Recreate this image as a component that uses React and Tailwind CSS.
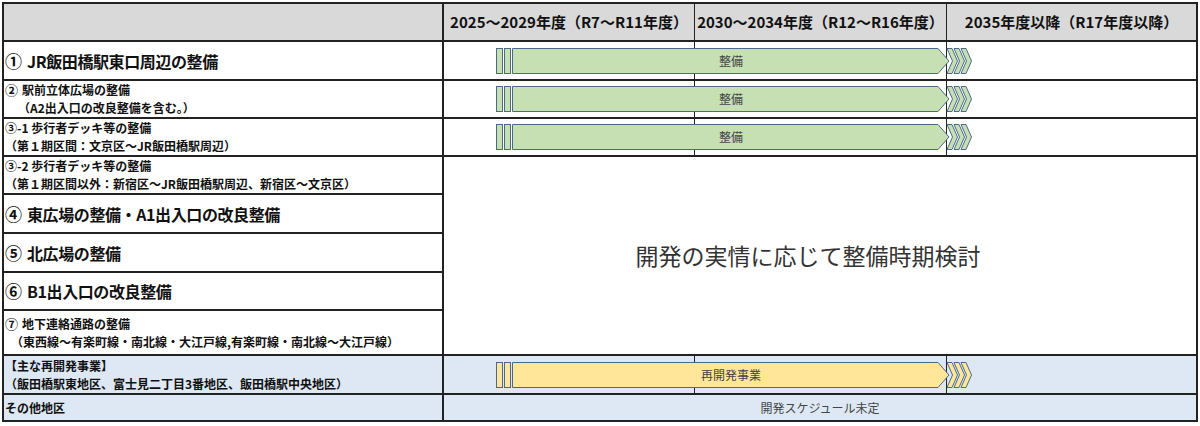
import React from 'react';

const headers = ['2025～2029年度（R7～R11年度）', '2030～2034年度（R12～R16年度）', '2035年度以降（R17年度以降）'];

const GREEN = '#c6e0b4';
const YELLOW = '#ffe699';
const EDGE = '#4b6a8b';

// bar with two start ticks and trailing chevrons
const Bar = ({ fill, label }) => (
  <div className="absolute left-[52px] top-1/2 -translate-y-1/2 w-[476px] h-[26px]">
    <svg width="476" height="26" viewBox="0 0 476 26" className="absolute inset-0">
      <rect x="0.5" y="0.5" width="6" height="25" fill={fill} stroke={EDGE} />
      <rect x="8.5" y="0.5" width="6" height="25" fill={fill} stroke={EDGE} />
      <polygon points="16.5,0.5 442,0.5 453,13 442,25.5 16.5,25.5" fill={fill} stroke={EDGE} />
      {[451, 458, 465].map((x) => (
        <polygon
          key={x}
          points={`${x},0.5 ${x + 5},0.5 ${x + 10.5},13 ${x + 5},25.5 ${x},25.5 ${x + 5.5},13`}
          fill={fill}
          stroke={EDGE}
        />
      ))}
    </svg>
    <div className="absolute left-[16px] right-[22px] inset-y-0 flex items-center justify-center text-[12px] text-[#444]">
      {label}
    </div>
  </div>
);

const Lanes = () => (
  <div className="grid grid-cols-[251px_252px_1fr] h-full">
    <div className="border-r border-[#222]" />
    <div className="border-r border-[#222]" />
    <div />
  </div>
);

const BigLabel = ({ num, text }) => (
  <div className="col-start-1 border-r-2 border-b-2 border-[#222] flex items-center pl-[1px] text-[16px] font-bold text-[#111]">
    <span className="text-[17px] mr-[5px]">{num}</span>
    <span className="tracking-[-0.4px]">{text}</span>
  </div>
);

const SmallLabel = ({ num, top, bottom, indent = '', bg = '' }) => (
  <div className={`col-start-1 border-r-2 border-b-2 border-[#222] flex flex-col justify-center pl-[1px] text-[12px] font-bold leading-[18px] text-[#111] ${bg}`}>
    <span>
      {num && <span className="text-[13px] mr-[4px]">{num}</span>}
      {top}
    </span>
    <span className={indent}>{bottom}</span>
  </div>
);

const BarCell = ({ fill, label, bg = 'bg-white' }) => (
  <div className={`col-start-2 relative border-b-2 border-[#222] ${bg}`}>
    <Lanes />
    <Bar fill={fill} label={label} />
  </div>
);

export default function App() {
  return (
    <div className="w-[1200px] h-[426px] bg-white pl-[2px] pt-[2px] font-['Noto_Sans_CJK_JP','Noto_Sans',sans-serif]">
      <div className="w-[1196px] border-2 border-[#222] grid grid-cols-[440px_752px] grid-rows-[38px_39px_38px_38px_38px_39px_39px_38px_45px_39px_25px]">
        {/* header */}
        <div className="col-start-1 bg-[#d9d9d9] border-r-2 border-b-2 border-[#222]" />
        <div className="col-start-2 bg-[#d9d9d9] border-b-2 border-[#222] grid grid-cols-[251px_252px_1fr]">
          {headers.map((h, i) => (
            <div
              key={h}
              className={`flex items-center justify-center text-[15px] font-bold text-[#111] ${i < 2 ? 'border-r border-[#222]' : ''}`}
            >
              {h}
            </div>
          ))}
        </div>

        {/* ① */}
        <BigLabel num="①" text="JR飯田橋駅東口周辺の整備" />
        <BarCell fill={GREEN} label="整備" />

        {/* ② */}
        <SmallLabel num="②" top="駅前立体広場の整備" bottom="（A2出入口の改良整備を含む。）" indent="pl-[13px]" />
        <BarCell fill={GREEN} label="整備" />

        {/* ③-1 */}
        <SmallLabel top="③-1 歩行者デッキ等の整備" bottom="（第１期区間：文京区～JR飯田橋駅周辺）" />
        <BarCell fill={GREEN} label="整備" />

        {/* ③-2 */}
        <SmallLabel top="③-2 歩行者デッキ等の整備" bottom="（第１期区間以外：新宿区～JR飯田橋駅周辺、新宿区～文京区）" />
        <div className="col-start-2 row-span-5 border-b-2 border-[#222] bg-white flex items-center justify-center pr-[24px] text-[23px] text-[#333]">
          開発の実情に応じて整備時期検討
        </div>

        <BigLabel num="④" text="東広場の整備・A1出入口の改良整備" />
        <BigLabel num="⑤" text="北広場の整備" />
        <BigLabel num="⑥" text="B1出入口の改良整備" />
        <SmallLabel
          num="⑦"
          top="地下連絡通路の整備"
          bottom="（東西線～有楽町線・南北線・大江戸線,有楽町線・南北線～大江戸線）"
          indent="pl-[6px]"
        />

        {/* redevelopment */}
        <SmallLabel
          top="【主な再開発事業】"
          bottom="（飯田橋駅東地区、富士見二丁目3番地区、飯田橋駅中央地区）"
          bg="bg-[#dde8f4]"
        />
        <BarCell fill={YELLOW} label="再開発事業" bg="bg-[#dde8f4]" />

        {/* others */}
        <div className="col-start-1 border-r-2 border-[#222] bg-[#dde8f4] flex items-center pl-[1px] text-[12px] font-bold text-[#111]">
          その他地区
        </div>
        <div className="col-start-2 bg-[#dde8f4] flex items-center justify-center text-[12px] text-[#444]">
          開発スケジュール未定
        </div>
      </div>
    </div>
  );
}
